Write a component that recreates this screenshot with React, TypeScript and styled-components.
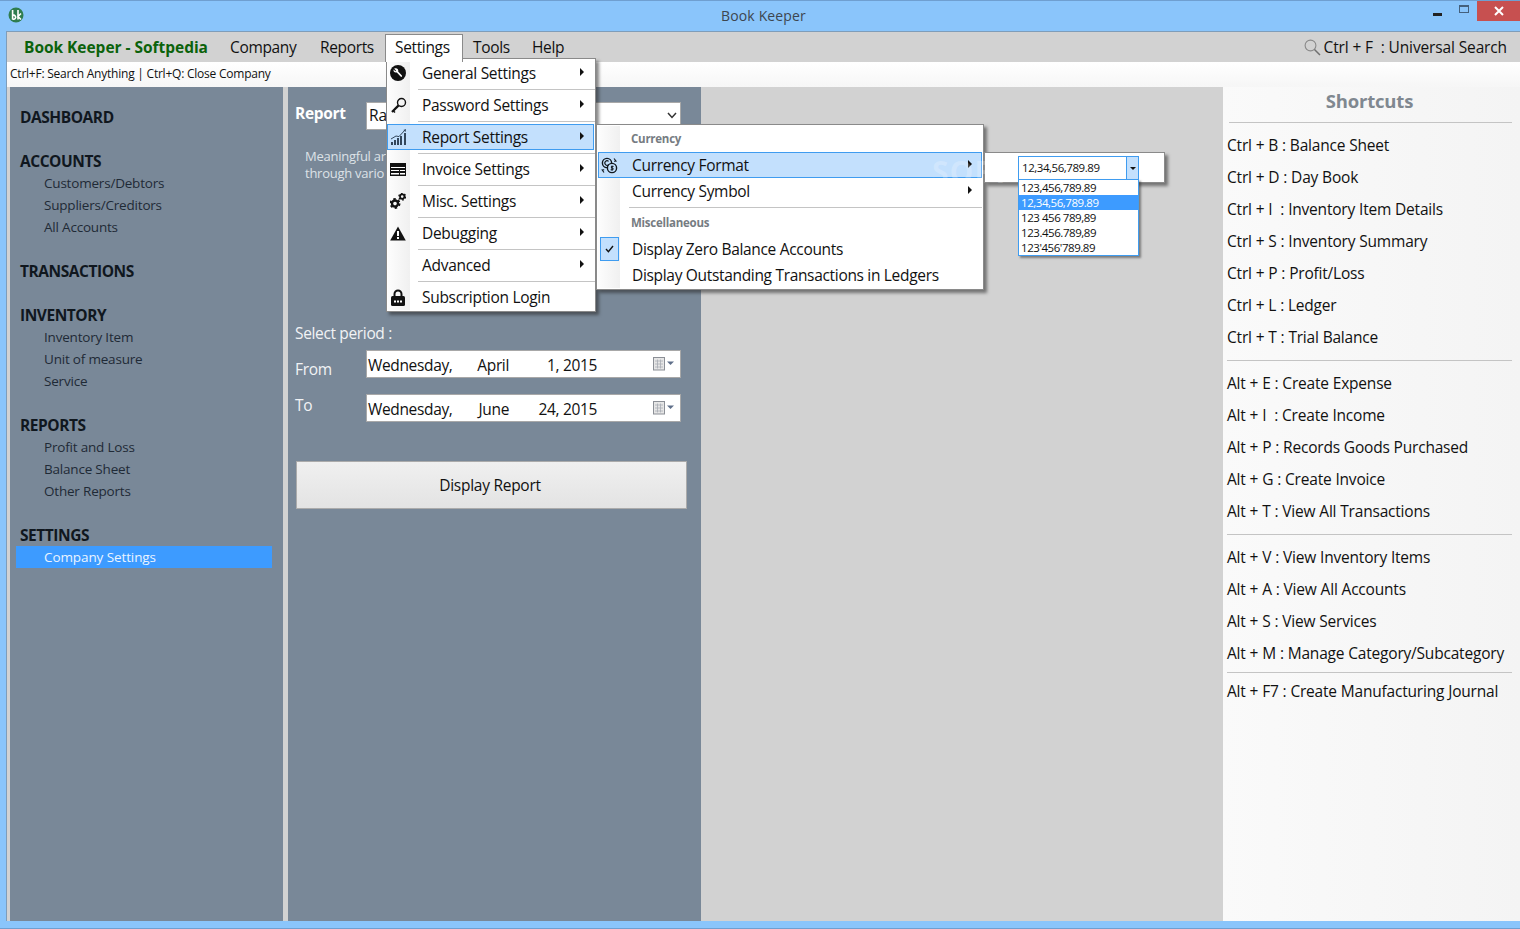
import React from "react";
import styled, { createGlobalStyle } from "styled-components";

const UI = `"Open Sans", "Noto Sans", sans-serif`;

const Global = createGlobalStyle`
  html, body { margin: 0; padding: 0; background: #8ac5fb; }
  * { box-sizing: border-box; }
  #root { width: 1520px; height: 929px; overflow: hidden; }
`;

const Window = styled.div`
  position: relative;
  width: 1520px;
  height: 929px;
  display: flex;
  flex-direction: column;
  background: #8ac5fb;
  border-top: 1px solid #6f9fd0;
  border-bottom: 1px solid #6f9fd0;
  font-family: ${UI};
  color: #111;
  overflow: hidden;
`;
const TitleBar = styled.div`
  height: 30px;
  flex: none;
  display: flex;
  align-items: flex-start;
  padding-left: 8px;
`;
const AppLogo = styled.svg`
  width: 16px;
  height: 16px;
  margin-top: 6px;
  flex: none;
`;
const TitleText = styled.div`
  flex: 1;
  text-align: center;
  padding: 5px 0 0 80px;
  font-size: 14px;
  letter-spacing: 0.15px;
  color: #3d4650;
`;
const WinButtons = styled.div`
  display: flex;
  align-items: flex-start;
`;
const WinBtn = styled.div<{ $w: number; $close?: boolean }>`
  width: ${(p) => p.$w}px;
  height: 20px;
  display: flex;
  align-items: center;
  justify-content: center;
  background: ${(p) => (p.$close ? "#c75050" : "transparent")};
`;
const MinGlyph = styled.div`
  width: 9px;
  height: 3px;
  margin-top: 7px;
  background: #222;
`;
const MaxGlyph = styled.div`
  width: 10px;
  height: 8px;
  margin-top: -5px;
  border: 1px solid #44607c;
  border-top-width: 2px;
`;
const Main = styled.div`
  flex: 1;
  min-height: 0;
  margin: 0 0 7px 6px;
  display: flex;
  flex-direction: column;
  border-top: 1px solid #7f9db9;
  border-left: 1px solid #7f9db9;
`;
const MenuBar = styled.div`
  position: relative;
  height: 30px;
  flex: none;
  display: flex;
  align-items: flex-end;
  background: #d2d2d2;
  padding: 0 13px 0 17px;
  font-size: 15.5px;
  letter-spacing: -0.35px;
`;
const Brand = styled.div`
  width: 206px;
  height: 28px;
  line-height: 26px;
  font-weight: 700;
  color: #0b620b;
  letter-spacing: -0.03px;
`;
const TopItem = styled.div<{ $w: number }>`
  width: ${(p) => p.$w}px;
  height: 28px;
  line-height: 26px;
  color: #111;
`;
const TopTab = styled.div`
  position: relative;
  z-index: 6;
  width: 78px;
  height: 28px;
  line-height: 25px;
  padding-left: 9px;
  margin-left: -10px;
  margin-right: 10px;
  background: #fff;
  border: 1px solid #8a8a8a;
  border-bottom: none;
`;
const SearchHint = styled.div`
  margin-left: auto;
  display: flex;
  align-items: center;
  gap: 3px;
  height: 26px;
  margin-bottom: 2px;
  line-height: 26px;
  color: #111;
  letter-spacing: -0.13px;
`;
const SearchText = styled.span`
  white-space: pre;
`;
const InfoBar = styled.div`
  height: 25px;
  flex: none;
  padding-left: 3px;
  line-height: 24px;
  font-size: 12px;
  letter-spacing: -0.23px;
  color: #111;
  background: linear-gradient(#fff, #f6f6f6);
`;
const Body = styled.div`
  flex: 1;
  min-height: 0;
  display: flex;
  background: #d2d2d2;
  padding-left: 3px;
`;
const Nav = styled.nav`
  width: 273px;
  flex: none;
  background: #798898;
  padding: 19px 0 0 6px;
  display: flex;
  flex-direction: column;
  gap: 22px;
`;
const NavGroup = styled.div`
  display: flex;
  flex-direction: column;
`;
const NavHead = styled.div`
  height: 22px;
  line-height: 22px;
  padding-left: 4px;
  font-size: 15.5px;
  font-weight: 700;
  letter-spacing: -0.45px;
  color: #10171e;
`;
const NavItem = styled.div<{ $active?: boolean }>`
  width: 256px;
  height: 22px;
  line-height: 22px;
  padding-left: 28px;
  font-size: 13.5px;
  letter-spacing: ${(p) => (p.$active ? "-0.1px" : "-0.2px")};
  color: ${(p) => (p.$active ? "#eaf4ff" : "#1f2a36")};
  background: ${(p) => (p.$active ? "#3d9bff" : "transparent")};
`;
const Panel = styled.section`
  width: 413px;
  margin-left: 5px;
  flex: none;
  background: #798898;
  padding: 15px 14px 0 7px;
  color: #f1f3f5;
`;
const ReportRow = styled.div`
  display: flex;
  align-items: center;
  height: 28px;
`;
const ReportLabel = styled.div`
  width: 71px;
  padding-bottom: 6px;
  font-size: 15.5px;
  font-weight: 700;
  letter-spacing: -0.3px;
  color: #fff;
`;
const Select = styled.div`
  flex: 1;
  height: 28px;
  margin-right: 6px;
  display: flex;
  align-items: center;
  justify-content: space-between;
  padding: 0 3px 2px 2px;
  background: #fff;
  border: 1px solid #a8a8a8;
  color: #111;
  font-size: 15.5px;
`;
const Blurb = styled.p`
  margin: 18px 0 0 10px;
  height: 174px;
  font-size: 13px;
  line-height: 17px;
  letter-spacing: -0.25px;
  color: #dde2e7;
`;
const PeriodLabel = styled.div`
  height: 22px;
  line-height: 22px;
  font-size: 15.5px;
  letter-spacing: -0.35px;
`;
const DateRow = styled.div<{ $top: number }>`
  display: flex;
  margin-top: ${(p) => p.$top}px;
  height: 28px;
`;
const DateLabel = styled.div<{ $shift: number }>`
  width: 71px;
  font-size: 15.5px;
  line-height: 22px;
  margin-top: ${(p) => p.$shift}px;
  letter-spacing: -0.3px;
`;
const DateBox = styled.div`
  flex: 1;
  margin-right: 6px;
  display: flex;
  align-items: center;
  padding: 2px 0 0 1px;
  background: #fff;
  border: 1px solid #a8a8a8;
  color: #111;
  font-size: 15.5px;
  letter-spacing: -0.35px;
`;
const DatePart = styled.span<{ $w: number; $right?: boolean }>`
  width: ${(p) => p.$w}px;
  display: flex;
  justify-content: ${(p) => (p.$right ? "flex-end" : "flex-start")};
  white-space: nowrap;
`;
const CalBtn = styled.svg`
  margin-left: auto;
  margin-right: 5px;
  margin-top: -3px;
  width: 22px;
  height: 14px;
`;
const DisplayButton = styled.button`
  display: block;
  width: 391px;
  height: 48px;
  margin: 39px 0 0 1px;
  padding-right: 9px;
  background: linear-gradient(#f0f0f0, #e3e3e3);
  border: 1px solid #ababab;
  font-family: ${UI};
  font-size: 15.5px;
  letter-spacing: -0.27px;
  color: #111;
`;
const Middle = styled.div`
  flex: 1;
`;
const Shortcuts = styled.aside`
  width: 297px;
  flex: none;
  background: linear-gradient(90deg, #fafafa, #f4f4f4);
  padding: 0 8px 0 4px;
`;
const ShortTitle = styled.div`
  height: 36px;
  border-bottom: 1px solid #c4c4c4;
  margin-left: 2px;
  padding-top: 1px;
  padding-right: 2px;
  text-align: center;
  font-size: 18.5px;
  line-height: 25px;
  font-weight: 700;
  letter-spacing: -0.2px;
  color: #808890;
`;
const ShortGroup = styled.div<{ $pt: number; $pb: number; $rule?: boolean }>`
  padding: ${(p) => p.$pt}px 0 ${(p) => p.$pb}px;
  border-bottom: 1px solid ${(p) => (p.$rule ? "#c4c4c4" : "transparent")};
`;
const ShortRow = styled.div`
  height: 32px;
  line-height: 30px;
  font-size: 15.5px;
  letter-spacing: -0.2px;
  word-spacing: 0.12px;
  white-space: pre;
  color: #111;
`;

/* overlays */
const Popup = styled.div<{ $x: number; $y: number; $w: number; $h: number }>`
  position: absolute;
  left: ${(p) => p.$x}px;
  top: ${(p) => p.$y}px;
  width: ${(p) => p.$w}px;
  height: ${(p) => p.$h}px;
  background: #fff;
  border: 1px solid #8a8a8a;
  box-shadow: 3px 3px 3px rgba(40, 40, 40, 0.55);
  z-index: 5;
  font-size: 15.5px;
  letter-spacing: -0.35px;
  color: #111;
`;
const IconRail = styled.div<{ $w: number }>`
  position: absolute;
  left: 1px;
  top: 1px;
  bottom: 1px;
  width: ${(p) => p.$w}px;
  background: linear-gradient(90deg, #fdfdfd, #f0f0f0);
`;
const ItemStack = styled.div`
  position: relative;
  display: flex;
  flex-direction: column;
`;
const MenuSlot = styled.div<{ $first?: boolean; $rule?: boolean }>`
  position: relative;
  height: ${(p) => (p.$first ? 30 : 32)}px;
  padding: ${(p) => (p.$first ? "1px 1px 3px 0" : "3px 1px 3px 0")};
  &::after {
    content: "";
    display: ${(p) => (p.$rule ? "block" : "none")};
    position: absolute;
    left: 31px;
    right: 0;
    bottom: -1px;
    height: 1px;
    background: #c4c4c4;
  }
`;
const MenuRow = styled.div<{ $hot?: boolean; $inset?: boolean }>`
  height: 26px;
  display: flex;
  align-items: center;
  margin: ${(p) => (p.$inset ? "0 1px" : "0")};
  border: 1px solid ${(p) => (p.$hot ? "#3f9cf0" : "transparent")};
  background: ${(p) => (p.$hot ? "#c3e0fd" : "transparent")};
`;
const IconCell = styled.div<{ $nudge?: number }>`
  width: 20px;
  margin-left: ${(p) => p.$nudge ?? 1}px;
  height: 20px;
  display: flex;
  align-items: center;
  justify-content: center;
  flex: none;
`;
const RowLabel = styled.div`
  margin-left: 14px;
  flex: 1;
  white-space: nowrap;
  letter-spacing: -0.3px;
`;
const Arrow = styled.div`
  width: 0;
  height: 0;
  margin-right: 9px;
  margin-top: -2px;
  border-left: 4px solid #111;
  border-top: 4px solid transparent;
  border-bottom: 4px solid transparent;
`;
const SubHead = styled.div<{ $h: number; $pt: number }>`
  height: ${(p) => p.$h}px;
  padding: ${(p) => p.$pt}px 0 0 34px;
  font-size: 11.5px;
  line-height: 16px;
  font-weight: 700;
  letter-spacing: -0.25px;
  color: #767c82;
`;
const SubRule = styled.div`
  margin: 3px 1px 0 32px;
  height: 1px;
  background: #c4c4c4;
`;
const CheckMark = styled.div`
  width: 19px;
  height: 24px;
  margin-left: 1px;
  display: flex;
  align-items: center;
  justify-content: center;
  background: #c3e0fd;
  border: 1px solid #3f9cf0;
  flex: none;
`;
const SubLabel = styled.div<{ $gap?: number }>`
  margin-left: ${(p) => p.$gap ?? 12}px;
  flex: 1;
  white-space: nowrap;
  letter-spacing: -0.32px;
`;
const Spacer = styled.div`
  width: 21px;
  flex: none;
`;
const Combo = styled.div`
  position: absolute;
  left: 33px;
  top: 3px;
  width: 121px;
  height: 24px;
  display: flex;
  background: #fff;
  border: 1px solid #3f9cf0;
  font-size: 11.5px;
  line-height: 21px;
  letter-spacing: -0.45px;
  padding-left: 3px;
`;
const ComboButton = styled.div`
  margin-left: auto;
  width: 12px;
  display: flex;
  align-items: center;
  justify-content: center;
  background: #c3e0fd;
  border-left: 1px solid #3f9cf0;
`;
const ComboCaret = styled.div`
  width: 0;
  height: 0;
  border-top: 3px solid #111;
  border-left: 3px solid transparent;
  border-right: 3px solid transparent;
`;
const DropList = styled.div`
  position: absolute;
  left: 1018px;
  top: 178px;
  width: 121px;
  height: 77px;
  z-index: 7;
  background: #fff;
  border: 1px solid #3f9cf0;
  box-shadow: 2px 2px 2px rgba(40, 40, 40, 0.5);
  font-size: 11.5px;
  letter-spacing: -0.45px;
`;
const DropItem = styled.div<{ $sel?: boolean }>`
  height: 15px;
  line-height: 15px;
  padding-left: 2px;
  color: ${(p) => (p.$sel ? "#fff" : "#111")};
  background: ${(p) => (p.$sel ? "#3d9bff" : "transparent")};
`;
const Watermark = styled.div`
  position: absolute;
  left: 932px;
  top: 150px;
  z-index: 6;
  font-size: 30px;
  font-weight: 700;
  letter-spacing: 1px;
  color: rgba(255, 255, 255, 0.22);
  pointer-events: none;
`;

/* ---------- icons ---------- */
const Wrench = () => (
  <svg width="16" height="16" viewBox="0 0 16 16">
    <circle cx="8" cy="8" r="8" fill="#111" />
    <path d="M4 3.6 L6 5.4 L5.4 6.2 L3.6 4.6 C3 7 5 8 6.8 7.4 L10.6 11.6 C11.3 12.4 12.6 11.3 11.9 10.4 L8.2 6.4 C8.8 4.6 7 2.4 4.6 3.4 Z" fill="#fff" />
  </svg>
);
const Key = () => (
  <svg width="17" height="17" viewBox="0 0 17 17" fill="none">
    <circle cx="11.5" cy="5.5" r="4" stroke="#111" strokeWidth="1.4" />
    <path d="M8.6 8.4 L2 15" stroke="#111" strokeWidth="2.2" />
    <path d="M3.2 13.8 L5 15.6" stroke="#111" strokeWidth="1.4" />
  </svg>
);
const ChartIcon = () => (
  <svg width="17" height="16" viewBox="0 0 17 16" fill="#33475c">
    <path d="M1 13h2v3H1zM4 11h2v5H4zM7 9h2v7H7zM10 7h2v9h-2zM14 4h2v12h-2z" />
    <path d="M1 10 L6 7 L9 7.6 L15 1" fill="none" stroke="#33475c" strokeWidth="1" />
    <path d="M13.4 1 L16 0 L15.6 3 Z" />
  </svg>
);
const InvoiceIcon = () => (
  <svg width="16" height="13" viewBox="0 0 16 13">
    <rect width="16" height="13" fill="#111" />
    <path d="M1 4h14v1H1zM1 7h8v1H1zM1 10h8v1.5H1zM10 7h5v1h-5zM10 10h5v1.5h-5z" fill="#fff" />
  </svg>
);
const Gear = ({ x, y, r }: { x: number; y: number; r: number }) => (
  <g transform={`translate(${x} ${y})`}>
    <circle r={r} fill="none" stroke="#111" strokeWidth={r * 0.8} />
    <circle r={r * 1.5} fill="none" stroke="#111" strokeWidth={r * 0.65} strokeDasharray={`${r * 0.8} ${r * 0.78}`} />
  </g>
);
const GearsIcon = () => (
  <svg width="16" height="16" viewBox="0 0 16 16">
    <Gear x={5} y={10.5} r={3} />
    <Gear x={12.2} y={3.6} r={2.2} />
  </svg>
);
const WarnIcon = () => (
  <svg width="16" height="15" viewBox="0 0 16 15">
    <path d="M8 0.5 L15.8 14.5 H0.2 Z" fill="#111" />
    <path d="M7 5h2v5H7zM7 11h2v2H7z" fill="#fff" />
  </svg>
);
const LockIcon = () => (
  <svg width="14" height="17" viewBox="0 0 14 17">
    <path d="M3.5 8V5 a3.5 3.5 0 0 1 7 0V8" fill="none" stroke="#111" strokeWidth="2" />
    <rect y="7" width="14" height="10" rx="1.5" fill="#111" />
    <path d="M3 11.5h2v2H3zM6 11.5h2v2H6zM9 11.5h2v2H9z" fill="#fff" />
  </svg>
);
const CurrencyIcon = () => (
  <svg width="17" height="17" viewBox="0 0 17 17" fill="none" stroke="#10171e" strokeWidth="1.4">
    <circle cx="6" cy="6" r="4.6" />
    <circle cx="11" cy="11" r="4.6" fill="#c3e0fd" />
    <path d="M7.6 4.4 A2.2 2.2 0 1 0 7.6 7.6" strokeWidth="1.1" />
    <path d="M12.6 9.4 H10.4 V11 H12 V12.8 H9.6 M11 8.6 V13.6" strokeWidth="1" />
    <path d="M13 1.5 L15 4 L13 4.2 M3 15.5 L1.2 13 L3.2 12.8" strokeWidth="1.1" />
  </svg>
);
const SearchIcon = () => (
  <svg width="17" height="17" viewBox="0 0 17 17" fill="none">
    <circle cx="6.5" cy="6.5" r="5.4" stroke="#8a8a8a" strokeWidth="1.1" />
    <path d="M10.5 10.5 L16 16" stroke="#6f6f6f" strokeWidth="1.5" />
  </svg>
);
const Chevron = () => (
  <svg width="10" height="7" viewBox="0 0 10 7" fill="none">
    <path d="M1 1 L5 5.4 L9 1" stroke="#333" strokeWidth="1.5" />
  </svg>
);
const Calendar = () => (
  <CalBtn viewBox="0 0 22 14">
    <rect x="0.5" y="0.5" width="11" height="12.5" fill="#e6e6e6" stroke="#8b8f96" />
    <path d="M2 4h8M2 7h8M2 10h8M4.5 2.5v9M7.5 2.5v9" stroke="#a9adb5" strokeWidth="0.8" />
    <path d="M14 4.5h7l-3.5 3.5z" fill="#5f6f89" />
  </CalBtn>
);

const settingsItems: { icon?: React.ReactNode; label: string; hot?: boolean; arrow?: boolean; rule?: boolean }[] = [
  { icon: <Wrench />, label: "General Settings", arrow: true, rule: true },
  { icon: <Key />, label: "Password Settings", arrow: true, rule: true },
  { icon: <ChartIcon />, label: "Report Settings", arrow: true, hot: true, rule: true },
  { icon: <InvoiceIcon />, label: "Invoice Settings", arrow: true, rule: true },
  { icon: <GearsIcon />, label: "Misc. Settings", arrow: true, rule: true },
  { icon: <WarnIcon />, label: "Debugging", arrow: true, rule: true },
  { label: "Advanced", arrow: true, rule: true },
  { icon: <LockIcon />, label: "Subscription Login" },
];

const shortcutGroups = [
  { pt: 7, pb: 6, rule: true, rows: ["Ctrl + B : Balance Sheet", "Ctrl + D : Day Book", "Ctrl + I  : Inventory Item Details", "Ctrl + S : Inventory Summary", "Ctrl + P : Profit/Loss", "Ctrl + L : Ledger", "Ctrl + T : Trial Balance"] },
  { pt: 7, pb: 6, rule: true, rows: ["Alt + E : Create Expense", "Alt + I  : Create Income", "Alt + P : Records Goods Purchased", "Alt + G : Create Invoice", "Alt + T : View All Transactions"] },
  { pt: 7, pb: 2, rule: true, rows: ["Alt + V : View Inventory Items", "Alt + A : View All Accounts", "Alt + S : View Services", "Alt + M : Manage Category/Subcategory"] },
  { pt: 3, pb: 0, rule: false, rows: ["Alt + F7 : Create Manufacturing Journal"] },
];

const navGroups: { head: string; items: string[] }[] = [
  { head: "DASHBOARD", items: [] },
  { head: "ACCOUNTS", items: ["Customers/Debtors", "Suppliers/Creditors", "All Accounts"] },
  { head: "TRANSACTIONS", items: [] },
  { head: "INVENTORY", items: ["Inventory Item", "Unit of measure", "Service"] },
  { head: "REPORTS", items: ["Profit and Loss", "Balance Sheet", "Other Reports"] },
  { head: "SETTINGS", items: ["Company Settings"] },
];

export default function App() {
  return (
    <Window>
      <Global />
      <TitleBar>
        <AppLogo viewBox="0 0 16 16">
          <circle cx="8" cy="8" r="7.5" fill="#2f7d4f" />
          <path d="M4.6 3v9.5M4.6 8.5a2 2 0 1 1 0 3.4M10 3v9.5M13 6.5L10 9.5L13 12.5" fill="none" stroke="#fff" strokeWidth="1.6" />
        </AppLogo>
        <TitleText>Book Keeper</TitleText>
        <WinButtons>
          <WinBtn $w={28}><MinGlyph /></WinBtn>
          <WinBtn $w={26}><MaxGlyph /></WinBtn>
          <WinBtn $w={43} $close>
            <svg width="10" height="10" viewBox="0 0 10 10"><path d="M1 1L9 9M9 1L1 9" stroke="#fff" strokeWidth="2" /></svg>
          </WinBtn>
        </WinButtons>
      </TitleBar>
      <Main>
        <MenuBar>
          <Brand>Book Keeper - Softpedia</Brand>
          <TopItem $w={90}>Company</TopItem>
          <TopItem $w={75}>Reports</TopItem>
          <TopTab>Settings</TopTab>
          <TopItem $w={59}>Tools</TopItem>
          <TopItem $w={50}>Help</TopItem>
          <SearchHint><SearchIcon /><SearchText>Ctrl + F  : Universal Search</SearchText></SearchHint>
        </MenuBar>
        <InfoBar>Ctrl+F: Search Anything | Ctrl+Q: Close Company</InfoBar>
        <Body>
          <Nav>
            {navGroups.map((g) => (
              <NavGroup key={g.head}>
                <NavHead>{g.head}</NavHead>
                {g.items.map((it) => (
                  <NavItem key={it} $active={it === "Company Settings"}>{it}</NavItem>
                ))}
              </NavGroup>
            ))}
          </Nav>
          <Panel>
            <ReportRow>
              <ReportLabel>Report</ReportLabel>
              <Select><span>Ra</span><Chevron /></Select>
            </ReportRow>
            <Blurb>Meaningful ar<br />through vario</Blurb>
            <PeriodLabel>Select period :</PeriodLabel>
            <DateRow $top={6}>
              <DateLabel $shift={8}>From</DateLabel>
              <DateBox>
                <DatePart $w={109}>Wednesday,</DatePart>
                <DatePart $w={32} $right>April</DatePart>
                <DatePart $w={88} $right>1, 2015</DatePart>
                <Calendar />
              </DateBox>
            </DateRow>
            <DateRow $top={16}>
              <DateLabel $shift={0}>To</DateLabel>
              <DateBox>
                <DatePart $w={109}>Wednesday,</DatePart>
                <DatePart $w={32} $right>June</DatePart>
                <DatePart $w={88} $right>24, 2015</DatePart>
                <Calendar />
              </DateBox>
            </DateRow>
            <DisplayButton>Display Report</DisplayButton>
          </Panel>
          <Middle />
          <Shortcuts>
            <ShortTitle>Shortcuts</ShortTitle>
            {shortcutGroups.map((g, i) => (
              <ShortGroup key={i} $pt={g.pt} $pb={g.pb} $rule={g.rule}>
                {g.rows.map((s) => <ShortRow key={s}>{s}</ShortRow>)}
              </ShortGroup>
            ))}
          </Shortcuts>
        </Body>
      </Main>

      <Popup $x={386} $y={57} $w={210} $h={254}>
        <IconRail $w={22} />
        <ItemStack>
          {settingsItems.map((it, i) => (
            <MenuSlot key={it.label} $first={i === 0} $rule={it.rule}>
              <MenuRow $hot={it.hot}>
                <IconCell $nudge={0}>{it.icon}</IconCell>
                <RowLabel>{it.label}</RowLabel>
                {it.arrow && <Arrow />}
              </MenuRow>
            </MenuSlot>
          ))}
        </ItemStack>
      </Popup>

      <Popup $x={596} $y={123} $w={388} $h={166}>
        <IconRail $w={22} />
        <ItemStack>
          <SubHead $h={27} $pt={6}>Currency</SubHead>
          <MenuRow $hot $inset>
            <IconCell $nudge={0}><CurrencyIcon /></IconCell>
            <SubLabel $gap={13}>Currency Format</SubLabel>
            <Arrow />
          </MenuRow>
          <MenuRow $inset>
            <Spacer />
            <SubLabel>Currency Symbol</SubLabel>
            <Arrow />
          </MenuRow>
          <SubRule />
          <SubHead $h={28} $pt={7}>Miscellaneous</SubHead>
          <MenuRow $inset>
            <CheckMark>
              <svg width="9" height="8" viewBox="0 0 9 8" fill="none"><path d="M1 4L3.4 6.6L8 1" stroke="#111" strokeWidth="1.4" /></svg>
            </CheckMark>
            <SubLabel $gap={13}>Display Zero Balance Accounts</SubLabel>
          </MenuRow>
          <MenuRow $inset>
            <Spacer />
            <SubLabel>Display Outstanding Transactions in Ledgers</SubLabel>
          </MenuRow>
        </ItemStack>
      </Popup>

      <Popup $x={984} $y={151} $w={181} $h={31}>
        <Combo>
          12,34,56,789.89
          <ComboButton><ComboCaret /></ComboButton>
        </Combo>
      </Popup>
      <DropList>
        <DropItem>123,456,789.89</DropItem>
        <DropItem $sel>12,34,56,789.89</DropItem>
        <DropItem>123 456 789,89</DropItem>
        <DropItem>123.456.789,89</DropItem>
        <DropItem>123'456'789.89</DropItem>
      </DropList>
      <Watermark>SOFT</Watermark>
    </Window>
  );
}
